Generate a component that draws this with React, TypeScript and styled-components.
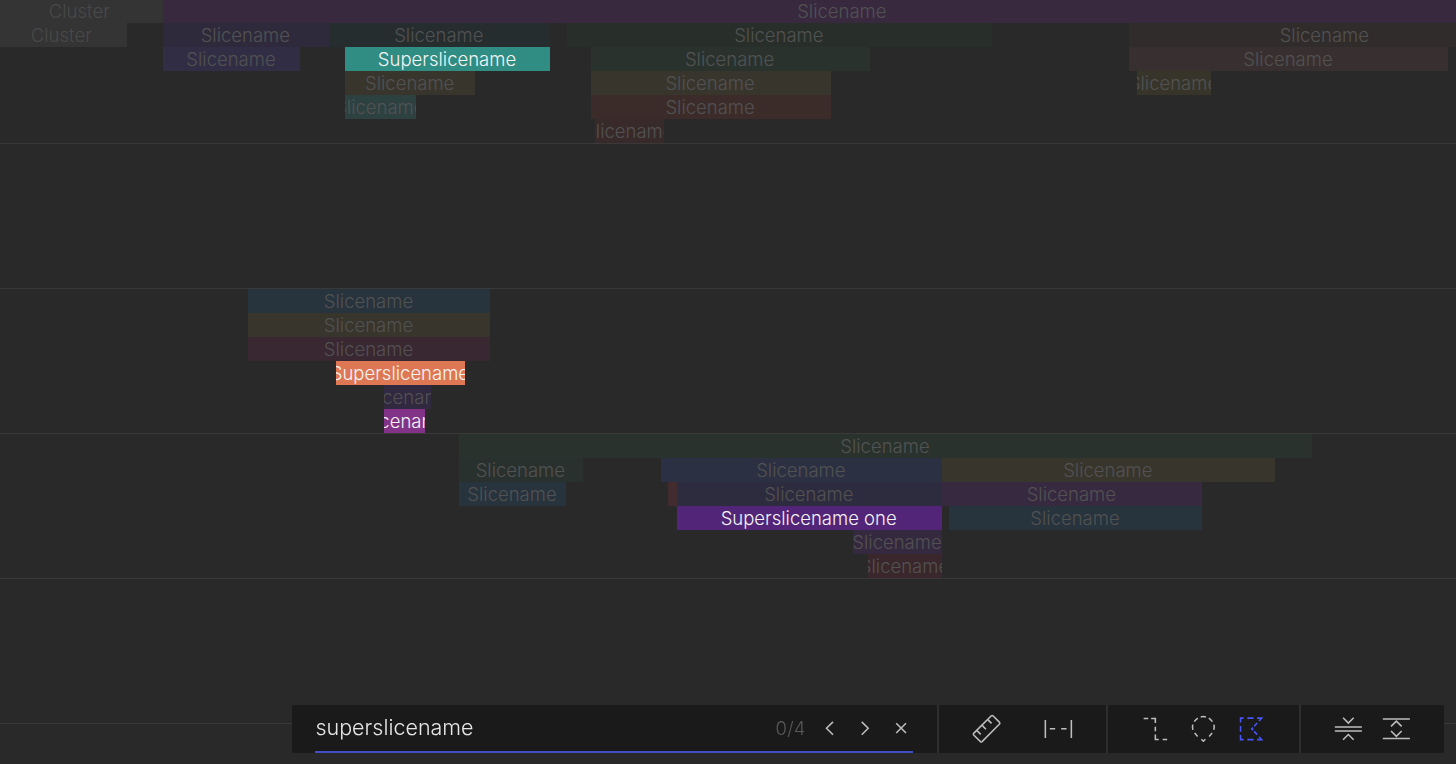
import React from 'react';
import styled, { createGlobalStyle } from 'styled-components';

const GlobalStyle = createGlobalStyle`
  * { box-sizing: border-box; }
  body {
    margin: 0;
    background: #292929;
    font-family: Inter, 'Liberation Sans', sans-serif;
    overflow: hidden;
  }
`;

const Page = styled.main`
  height: 764px;
  overflow: hidden;
  background: #292929;
`;

const Timeline = styled.div`
  display: flex;
  flex-direction: column;
  margin-top: -1px;
`;

const Track = styled.section`
  flex: none;
  height: 145px;
  border-bottom: 1px solid #393939;
`;

const Row = styled.div`
  display: flex;
  height: 24px;
`;

const Slice = styled.div<{ $gap: number; $width: number; $fill: string; $tone: Tone }>`
  flex: none;
  display: flex;
  justify-content: center;
  width: ${p => p.$width}px;
  margin-left: ${p => p.$gap}px;
  padding-right: 1.4px;
  background: ${p => p.$fill};
  color: ${p => tones[p.$tone]};
  font-size: 18.5px;
  font-weight: ${p => (p.$tone === 'bright' ? 350 : 300)};
  line-height: 24px;
  white-space: nowrap;
  overflow: hidden;
`;

const Label = styled.span`
  flex: none;
`;

const Toolbar = styled.div`
  position: fixed;
  left: 292px;
  top: 705px;
  display: flex;
  width: 1152px;
  height: 48px;
  border-radius: 2px;
  background: #1a1a1a;
  overflow: hidden;
`;

const SearchGroup = styled.div`
  width: 645px;
  padding: 0 23.6px 0 23.4px;
`;

const SearchField = styled.div`
  display: flex;
  align-items: center;
  height: 48px;
  border-bottom: 2px solid #434fc9;
`;

const Query = styled.span`
  flex: 1;
  color: #e6e6e6;
  font-size: 21.5px;
  font-weight: 300;
  line-height: 46px;
  margin-top: -2px;
`;

const Count = styled.span`
  margin-right: 5.4px;
  color: #585858;
  font-size: 18.5px;
  font-weight: 300;
  letter-spacing: 0.2px;
`;

const SearchButtons = styled.div`
  display: flex;
  margin-right: -5.6px;
`;

const ToolGroup = styled.div<{ $gap?: number }>`
  display: flex;
  gap: ${p => p.$gap ?? 0}px;
  padding: 0 24px 0 23px;
  border-left: 2px solid #2e2e2e;
`;

const IconButton = styled.button<{ $w: number; $active?: boolean }>`
  display: block;
  flex: none;
  width: ${p => p.$w}px;
  height: 48px;
  padding: 0;
  border: 0;
  background: none;
  color: ${p => (p.$active ? '#4656fa' : '#bdbdbd')};

  svg {
    display: block;
    width: ${p => p.$w}px;
    height: 48px;
    fill: none;
    stroke: currentColor;
    stroke-width: 1.55;
  }
`;

const Shift = styled.g`
  transform: translateX(0.35px);
`;

const tones = { dim: '#525252', faint: '#494949', bright: '#f4f4f4' };
type Tone = keyof typeof tones;

type SliceData = { from: number; to: number; fill: string; text?: string; tone?: Tone };

const s = (from: number, to: number, fill: string, text = 'Slicename', tone: Tone = 'dim'): SliceData => ({
  from, to, fill, text, tone,
});

const tracks: SliceData[][][] = [
  [
    [s(-3, 163, '#343435', 'Cluster', 'faint'), s(163, 1522, '#38293f')],
    [
      s(-3, 127, '#343435', 'Cluster', 'faint'),
      s(163, 329, '#2f2a3b'),
      s(329, 550, '#262d2f'),
      s(567, 992, '#282e2a'),
      s(1129, 1521, '#302c2b'),
    ],
    [
      s(163, 300.4, '#302d44'),
      s(345.4, 550, '#2f8d83', 'Superslicename', 'bright'),
      s(590.6, 870, '#2a322e'),
      s(1129, 1448.4, '#383030'),
    ],
    [s(345.4, 475.4, '#38352d'), s(590.6, 831, '#38352d'), s(1137.4, 1211, '#37352a')],
    [s(345.4, 415.6, '#2d4141'), s(590.6, 831, '#3b2c2a')],
    [s(595.4, 663.6, '#382a2a')],
  ],
  [],
  [
    [s(248, 490.4, '#27333d')],
    [s(248, 490.4, '#38352d')],
    [s(248, 490.4, '#392831')],
    [s(336.2, 465, '#de7854', 'Superslicename', 'bright')],
    [s(384, 430.6, '#31293f')],
    [s(384, 424.7, '#823388', 'Slicename', 'bright')],
  ],
  [
    [s(459, 1312.3, '#2a322d')],
    [s(459, 583, '#29312e'), s(661, 942, '#2b3042'), s(942, 1275, '#38352c')],
    [
      s(459, 566.4, '#27333d'),
      s(668.4, 677, '#432c30', ''),
      s(677, 942, '#2d2b3e'),
      s(942, 1202, '#37293f'),
    ],
    [s(677, 941.7, '#522579', 'Superslicename one', 'bright'), s(949.4, 1202, '#27333d')],
    [s(853.4, 942, '#34293f')],
    [s(868.4, 942, '#39272b')],
  ],
  [],
];

function SliceRow({ slices }: { slices: SliceData[] }) {
  return (
    <Row>
      {slices.map((d, i) => (
        <Slice
          key={d.from}
          $gap={d.from - (i ? slices[i - 1].to : 0)}
          $width={d.to - d.from}
          $fill={d.fill}
          $tone={d.tone ?? 'dim'}
        >
          <Label>{d.text}</Label>
        </Slice>
      ))}
    </Row>
  );
}

export default function App() {
  return (
    <Page>
      <GlobalStyle />
      <Timeline>
        {tracks.map((rows, t) => (
          <Track key={t}>
            {rows.map((slices, r) => (
              <SliceRow key={r} slices={slices} />
            ))}
          </Track>
        ))}
      </Timeline>
      <Toolbar>
        <SearchGroup>
          <SearchField>
            <Query>superslicename</Query>
            <Count>0/4</Count>
            <SearchButtons>
              <IconButton $w={36} aria-label="Previous">
                <svg viewBox="0 0 36 48"><path d="m22 17.9-6.5 6.4 6.5 6.4" /></svg>
              </IconButton>
              <IconButton $w={36} aria-label="Next">
                <svg viewBox="0 0 36 48"><path d="m14.7 17.9 6.5 6.4-6.5 6.4" /></svg>
              </IconButton>
              <IconButton $w={36} aria-label="Close">
                <svg viewBox="0 0 36 48"><path d="m13.2 19.2 9.8 9.8m0-9.8-9.8 9.8" /></svg>
              </IconButton>
            </SearchButtons>
          </SearchField>
        </SearchGroup>
        <ToolGroup $gap={24}>
          <IconButton $w={48} aria-label="Ruler">
            <svg viewBox="0 0 48 48">
              <Shift>
                <path strokeLinejoin="round" d="M29 10.8q.8-.6 1.6 0l6.6 6.6q.7.8 0 1.6L19.7 36.6q-.8.7-1.6 0L11.3 30q-.7-.8 0-1.6z" />
                <path d="m14.6 25.6 3.8 3.8m1.4-9 3.8 3.8m1.8-9.6 3.8 3.8" />
              </Shift>
            </svg>
          </IconButton>
          <IconButton $w={48} aria-label="Measure span">
            <svg viewBox="0 0 48 48">
              <Shift><path d="M11 15v18m26-18v18M15.5 23.8h5.3m6 0h5.4" /></Shift>
            </svg>
          </IconButton>
        </ToolGroup>
        <ToolGroup>
          <IconButton $w={48} aria-label="Step path">
            <svg viewBox="0 0 48 48">
              <Shift><path d="M12.3 13.4h4.6m2.9 0h4.2v4.6m0 3.7v4.6m0 3.3v4.8h3.4m3.9 0h4.5" /></Shift>
            </svg>
          </IconButton>
          <IconButton $w={48} aria-label="Pin">
            <svg viewBox="0 0 48 48">
              <Shift>
                <path d="M21.4 11.9a11 11 0 0 1 5.2 0M29.5 13.2a11 11 0 0 1 3.5 3.5M34.6 19.6a11 11 0 0 1-.1 5.3M32.8 28l-3 3.4M26 34.2l-2 2-2-2M18.3 31.4l-3-3.4M13.5 24.9a11 11 0 0 1-.1-5.3M15 16.7a11 11 0 0 1 3.5-3.5" />
              </Shift>
            </svg>
          </IconButton>
          <IconButton $w={48} $active aria-label="Area select">
            <svg viewBox="0 0 48 48">
              <Shift>
                <path d="M13.2 17.6v-4.5h3m3.8 0h6.2m3.5 0h4.6l-2.5 2.8M29.8 18l-3 3.2m-1.1 1.4-1.3 1.3 1.3 1.3m1.1 1.2 3 3.2m2 2.2 2.5 2.8h-4.6m-3.5 0H20m-3.8 0h-3V30m0-9.1v5.8" />
              </Shift>
            </svg>
          </IconButton>
        </ToolGroup>
        <ToolGroup>
          <IconButton $w={48} aria-label="Collapse">
            <svg viewBox="0 0 48 48">
              <Shift><path d="M10.5 22h27m-27 4h27M18.7 12.8l5.3 5.3 5.3-5.3M18.7 34.8l5.3-5.3 5.3 5.3" /></Shift>
            </svg>
          </IconButton>
          <IconButton $w={48} aria-label="Expand">
            <svg viewBox="0 0 48 48">
              <Shift><path d="M10.5 14h27m-27 19.4h27M18.7 21.4l5.3-5.3 5.3 5.3M18.7 26l5.3 5.3 5.3-5.3" /></Shift>
            </svg>
          </IconButton>
        </ToolGroup>
      </Toolbar>
    </Page>
  );
}
